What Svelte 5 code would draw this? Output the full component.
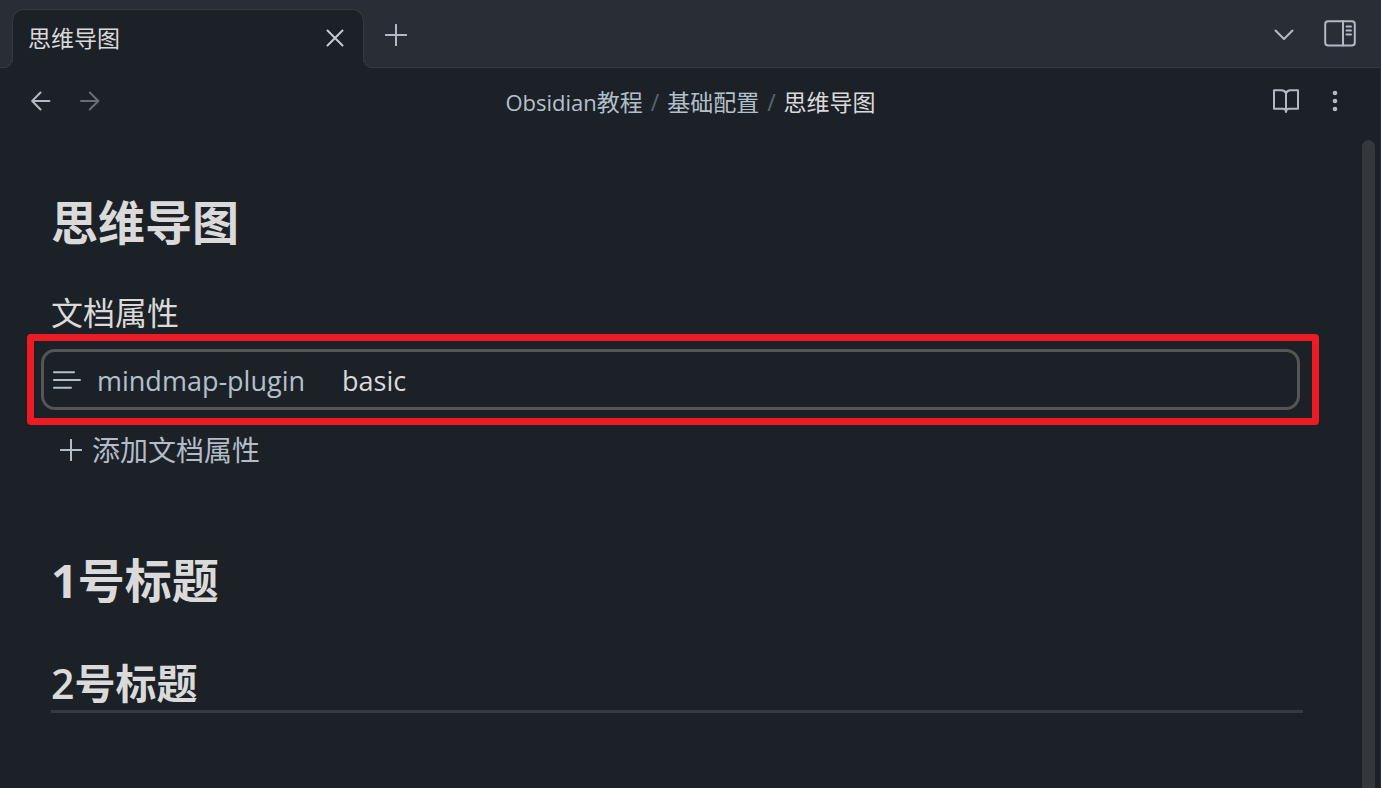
<script>
  const crumbs = [
    { latin: 'Obsidian', label: '教程' },
    { latin: '', label: '基础配置' }
  ];
</script>

<div class="window">
  <nav class="tabs" aria-label="标签页">
    <div class="tab">
      <span class="tab-title">思维导图</span>
      <button class="icon close" aria-label="关闭">
        <svg width="18" height="18" viewBox="0 0 18 18"><path d="M1.5 1.5 16.5 16.5M16.5 1.5 1.5 16.5" /></svg>
      </button>
    </div>
    <button class="icon new-tab" aria-label="新标签页">
      <svg width="22" height="22" viewBox="0 0 22 22"><path d="M11 .8V21.2M.8 11H21.2" /></svg>
    </button>
    <button class="icon more-tabs" aria-label="标签页列表">
      <svg width="20" height="12" viewBox="0 0 20 12"><path d="M1.5 1.5 10 10 18.5 1.5" /></svg>
    </button>
    <button class="icon sidebar" aria-label="展开侧边栏">
      <svg width="32" height="28" viewBox="0 0 32 28">
        <rect x="1.2" y="1.2" width="29.6" height="24.4" rx="3" />
        <path d="M19 1V25.6M22.5 6.4H27M22.5 10.4H27M22.5 14.4H27" />
      </svg>
    </button>
  </nav>

  <header class="view-header">
    <div class="side">
      <button class="icon" aria-label="后退">
        <svg width="20" height="20" viewBox="0 0 20 20"><path d="M18.5 10H1.5M9.5 1.5 1.2 10 9.5 18.5" /></svg>
      </button>
      <button class="icon faded" aria-label="前进">
        <svg width="20" height="20" viewBox="0 0 20 20"><path d="M1 10H18M9.8 1.5 18.3 10 9.8 18.5" /></svg>
      </button>
    </div>
    <div class="crumbs">
      {#each crumbs as crumb}
        <a href="#top"><span class="latin">{crumb.latin}</span>{crumb.label}</a><span class="slash">/</span>
      {/each}
      <span class="current">思维导图</span>
    </div>
    <div class="side end">
      <button class="icon" aria-label="阅读视图">
        <svg width="28" height="26" viewBox="0 0 28 26">
          <path d="M14 5.5C13.4 3.2 11.6 2.2 9.5 2.2H2V20.8H11C12.8 20.8 14 22 14 24C14 22 15.2 20.8 17 20.8H26V2.2H18.5C16.4 2.2 14.6 3.2 14 5.5ZM14 5.5V23" />
        </svg>
      </button>
      <button class="icon" aria-label="更多选项">
        <svg class="dots" width="6" height="22" viewBox="0 0 6 22"><circle cx="3" cy="3" r="2.3" /><circle cx="3" cy="11" r="2.3" /><circle cx="3" cy="19" r="2.3" /></svg>
      </button>
    </div>
  </header>

  <div class="body">
    <main id="top">
      <h1 class="title">思维导图</h1>
      <section class="properties">
        <div class="heading">文档属性</div>
        <div class="highlight">
          <div class="property">
            <svg width="28" height="20" viewBox="0 0 28 20"><path d="M1 2.2H21M1 10H27M1 17.8H18" /></svg>
            <label for="mindmap">mindmap-plugin</label>
            <input id="mindmap" value="basic" />
          </div>
        </div>
        <button class="add">
          <svg width="22" height="22" viewBox="0 0 22 22"><path d="M11 .8V21.2M.8 11H21.2" /></svg>
          添加文档属性
        </button>
      </section>
      <h1>1号标题</h1>
      <h2><span class="digit">2</span>号标题</h2>
    </main>
    <div class="scrollbar"></div>
  </div>
</div>

<style>
  :global(body) {
    margin: 0;
    background: #1c2127;
  }
  .window {
    box-sizing: border-box;
    display: flex;
    flex-direction: column;
    min-height: 100vh;
    border-right: 1px solid #2b2e38;
    background: #1c2127;
    color: #dadada;
    font-family: 'Open Sans', 'Noto Sans CJK SC', sans-serif;
  }
  button {
    display: flex;
    align-items: center;
    padding: 0;
    border: 0;
    background: none;
    color: #b3b8c4;
    font: inherit;
  }
  svg {
    flex: none;
    fill: none;
    stroke: currentColor;
    stroke-width: 2;
    stroke-linecap: round;
    stroke-linejoin: round;
  }
  .dots {
    fill: currentColor;
    stroke: none;
  }
  .faded {
    opacity: 0.5;
  }

  .tabs {
    display: flex;
    align-items: center;
    box-sizing: border-box;
    height: 68px;
    padding: 0 24px 0 12px;
    border-bottom: 1px solid #363a3f;
    background: #292d35;
  }
  .tab {
    position: relative;
    display: flex;
    align-items: center;
    justify-content: space-between;
    box-sizing: border-box;
    width: 352px;
    height: 59px;
    margin: 9px 21px -1px 0;
    padding: 0 19px 3px 15px;
    border: 1px solid #363a3f;
    border-bottom: 0;
    border-radius: 12px 12px 0 0;
    background: #1c2127;
  }
  .tab::before,
  .tab::after {
    content: '';
    position: absolute;
    bottom: 0;
    width: 8px;
    height: 8px;
    border: 1px solid #363a3f;
    border-top: 0;
    background: #292d35;
  }
  .tab::before {
    right: 100%;
    border-left: 0;
    border-radius: 0 0 9px 0;
    box-shadow: 3px 3px 0 #1c2127;
    clip-path: inset(0 -1px 0 0);
  }
  .tab::after {
    left: 100%;
    border-right: 0;
    border-radius: 0 0 0 9px;
    box-shadow: -3px 3px 0 #1c2127;
    clip-path: inset(0 0 0 -1px);
  }
  .tab-title {
    font-size: 23px;
    line-height: 32px;
  }
  .close {
    color: #c6cad3;
  }
  .new-tab,
  .more-tabs {
    padding-top: 2px;
  }
  .more-tabs {
    margin-left: auto;
  }
  .sidebar {
    margin-left: 30px;
  }

  .view-header {
    display: flex;
    align-items: center;
    height: 66px;
    padding: 0 42px 0 31px;
  }
  .side {
    display: flex;
    align-items: center;
    gap: 29px;
  }
  .end {
    gap: 32px;
  }
  .crumbs {
    display: flex;
    flex: 1;
    justify-content: center;
    gap: 8px;
    padding: 1px 0 0 9px;
    font-size: 23px;
    line-height: 32px;
  }
  .crumbs a {
    color: #b3c0cc;
    text-decoration: none;
  }
  .latin {
    font-size: 22px;
  }
  .slash {
    color: #5b6570;
  }

  .body {
    display: flex;
    flex: 1;
  }
  main {
    flex: 1;
    min-width: 0;
    padding: 56px 59px 0 51px;
  }
  h1,
  h2 {
    margin: 0;
    font-weight: 700;
  }
  h1 {
    font-size: 47px;
    line-height: 64px;
  }
  h2 {
    margin-top: 44px;
    border-bottom: 3px solid #363a3f;
    font-size: 41px;
    line-height: 54px;
  }
  .digit {
    font-weight: 600;
  }
  .properties {
    margin: 37px 0 78px;
  }
  .heading {
    font-size: 32px;
    line-height: 44px;
  }
  .highlight {
    margin: -1px -16px 0 -24px;
    padding: 8px 12px 8px 7px;
    border: 7px solid #ed1c24;
    border-radius: 4px;
  }
  .property {
    display: flex;
    align-items: center;
    box-sizing: border-box;
    height: 61px;
    padding: 0 9px;
    border: 3px solid #555;
    border-radius: 14px;
    color: #b3c0cc;
  }
  .property label,
  .property input {
    padding: 2px 0 0;
    font-size: 27px;
    line-height: 36px;
  }
  .property label {
    width: 229px;
    margin-left: 16px;
  }
  .property input {
    flex: 1;
    min-width: 0;
    margin-left: 16px;
    border: 0;
    outline: 0;
    background: none;
    color: #dadada;
    font-family: inherit;
  }
  .add {
    gap: 10px;
    margin: 5px 0 0 9px;
    color: #b3bcc8;
    font-size: 28px;
    line-height: 40px;
  }
  .scrollbar {
    width: 13px;
    margin: 6px 5px 0 0;
    border-radius: 7px 7px 0 0;
    background: #34383c;
  }
</style>
